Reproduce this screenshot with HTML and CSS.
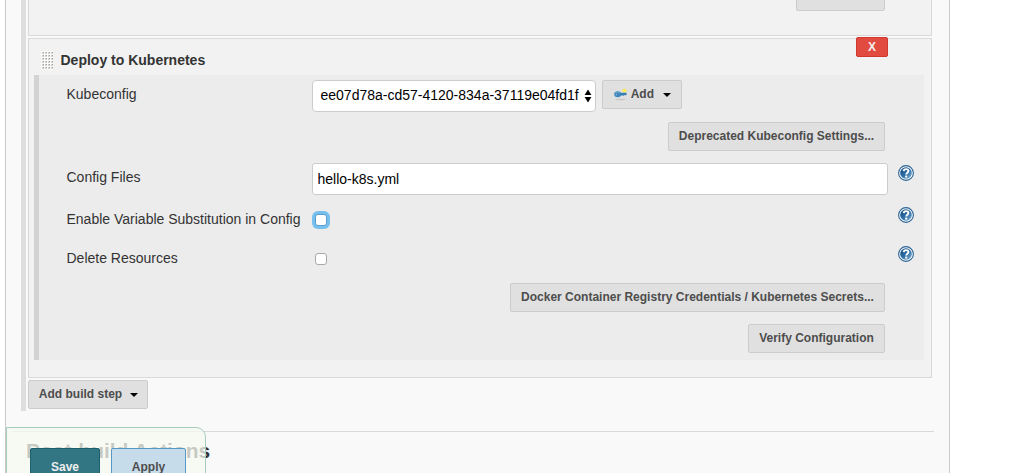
FILE: index.html
```
<!DOCTYPE html>
<html lang="en">
<head>
<meta charset="utf-8">
<title>Job configuration</title>
<link rel="stylesheet" href="styles.css">
</head>
<body>
<svg class="defs" width="0" height="0">
  <linearGradient id="blue" x1="0" y1="0" x2="1" y2="1"><stop offset="0" stop-color="#0d477f"/><stop offset=".5" stop-color="#2d6da5"/><stop offset="1" stop-color="#80aed0"/></linearGradient>
  <pattern id="dots" width="3" height="3" patternUnits="userSpaceOnUse"><rect x="1" y="1" width="2" height="2" fill="#d2d2ce"/><rect x="2" y="1" width="1" height="1" fill="#a3a39e"/></pattern>
  <symbol id="help" viewBox="0 0 16 16">
    <circle cx="8" cy="8" r="7.4" fill="#f4f8fb" stroke="#2a6496" stroke-width="1.1"/>
    <circle cx="8" cy="8" r="5.8" fill="url(#blue)"/>
    <path d="M5.7 6.1C5.8 3.5 10.4 3.4 10.4 6.1C10.4 7.6 8.2 7.7 8.2 9.4" fill="none" stroke="#fff" stroke-width="1.9"/>
    <rect x="7.2" y="10.6" width="2" height="2" fill="#fff"/>
  </symbol>
</svg>
<main class="panel">
  <div class="steps">
    <section class="card previous"><button class="btn advanced">Advanced...</button></section>
    <section class="card">
      <header class="card-head"><svg class="grip" width="12" height="19"><rect width="12" height="19" fill="#fcfcfc"/><rect width="12" height="19" fill="url(#dots)"/></svg><h3>Deploy to Kubernetes</h3><button class="delete">X</button></header>
      <div class="fields">
        <div class="row kube">
          <label>Kubeconfig</label>
          <div class="select"><span class="value">ee07d78a-cd57-4120-834a-37119e04fd1f</span>
            <svg width="8" height="14" viewBox="0 0 8 14"><path d="M4 .5L7.4 6H.6zM4 13.5L.6 8h6.8z"/></svg></div>
          <button class="btn add">
            <svg class="key" width="16" height="16" viewBox="0 0 16 16"><ellipse cx="7.5" cy="13.2" rx="6" ry=".9" fill="#c7c7c7"/><circle cx="12.2" cy="3" r="2.5" fill="#f8e56a"/><circle cx="12.2" cy="3" r="1.2" fill="#fff34a"/><path d="M7 5.3H14.4L15 7.1L13.6 8.7L12.2 8L11.2 9L10 8.5H7z" fill="#347fb8"/><ellipse cx="4.3" cy="7.2" rx="4" ry="3.5" fill="#3e87bd"/><path d="M1.7 6Q4 3.8 6.5 5.6" stroke="#78add1" fill="none"/><circle cx="2.8" cy="7.6" r=".7" fill="#a5c8de"/></svg>
            <span>Add</span><i class="caret"></i></button>
        </div>
        <div class="row buttons deprecated"><button class="btn">Deprecated Kubeconfig Settings...</button></div>
        <div class="row files"><label>Config Files</label><input class="text" type="text" value="hello-k8s.yml"><svg class="help"><use href="#help"/></svg></div>
        <div class="row variable"><label>Enable Variable Substitution in Config</label><span class="check focus"></span><svg class="help"><use href="#help"/></svg></div>
        <div class="row remove"><label>Delete Resources</label><span class="check"></span><svg class="help"><use href="#help"/></svg></div>
        <div class="row buttons docker"><button class="btn">Docker Container Registry Credentials / Kubernetes Secrets...</button></div>
        <div class="row buttons verify"><button class="btn">Verify Configuration</button></div>
      </div>
    </section>
    <button class="btn build"><span>Add build step</span><i class="caret"></i></button>
  </div>
  <section class="post"><h2>Post-build Actions</h2></section>
  <div class="sticky"><button class="save">Save</button><button class="apply">Apply</button></div>
</main>
</body>
</html>
```
FILE: styles.css
```
* { box-sizing: border-box; }
body { margin: 0; height: 473px; overflow: hidden; background: #fff; color: #333; font: 14px/18px "Liberation Sans", Arial, sans-serif; }
button { font: inherit; margin: 0; }
h2, h3 { margin: 0; }
.defs { position: absolute; }
.panel { position: relative; width: 945px; height: 473px; margin-left: 5px; border: solid #c9c9c9; border-width: 0 1px; background: #f9f9f9; overflow: hidden; }
.steps { width: 911px; height: 411px; margin-left: 15px; padding-left: 2px; border-left: 5px solid #dedede; }
.card { width: 904px; height: 340px; border: 1px solid #d9d9d9; background: #f2f2f2; }
.card.previous { display: flex; justify-content: flex-end; height: 36px; margin-bottom: 2px; padding-right: 46px; border-top: 0; }
.btn { display: flex; align-items: center; justify-content: center; height: 29px; padding: 0 10px 2px; border: 1px solid #ccc; border-radius: 2px; background: #e0e0e0; color: #4d4d4d; font-size: 12px; font-weight: bold; line-height: 18px; white-space: nowrap; }
.btn.advanced { width: 89px; margin-top: -18px; padding-bottom: 2px; }
.card-head { display: flex; height: 36px; padding-left: 12px; }
.grip { margin-top: 12px; }
h3 { margin: 12px 0 0 7.5px; font-size: 14px; line-height: 18px; flex: 1; }
.delete { width: 32px; height: 20px; margin: -2px 43px 0 0; padding: 0; border: 1px solid #d0392f; border-radius: 2px; background: #e24b40; color: #f6eeee; font-size: 12px; font-weight: bold; line-height: 18px; }
.fields { width: 890px; height: 285px; margin-left: 5px; border-left: 5px solid #d3d3d3; background: #ececec; }
.row { display: flex; align-items: flex-start; padding-left: 27.5px; }
.row label { width: 245.5px; flex: none; white-space: nowrap; }
.kube { height: 47px; padding-top: 5px; }
.kube label { padding-top: 5px; }
.select { display: flex; align-items: center; justify-content: space-between; width: 284px; height: 32px; padding: 0 3px 0 7.5px; border: 1px solid #ccc; border-radius: 4px; background: #fff; color: #000; }
.value { padding-bottom: 2px; }
.add { width: 80px; height: 29px; margin-left: 6px; justify-content: flex-start; }
.key { margin: 2px 3.5px 0 .5px; }
.caret { width: 0; height: 0; border: 4px solid transparent; border-top-color: #000; border-bottom: 0; margin: 3px 0 0 9px; }
.buttons { justify-content: flex-end; padding-right: 39px; }
.deprecated { height: 41px; }
.deprecated .btn { width: 217px; }
.files { height: 44px; }
.files label { padding-top: 5px; }
.text { width: 576px; height: 32px; padding: 0 5px 1px 4.5px; border: 1px solid #ccc; border-radius: 3px; background: #fff; color: #000; font: 14px "Liberation Sans", Arial, sans-serif; }
.help { width: 16px; height: 16px; margin: 2px 0 0 10px; flex: none; }
.row .check { width: 12px; height: 12px; margin: 7px 0 0 3px; border: 1px solid #a9a9a9; border-radius: 3px; background: #fff; }
.row .check.focus { border-color: #5b9dce; box-shadow: 0 0 0 3px #77c0ee; }
.check + .help { margin: 0 0 0 571px; }
.variable { height: 39px; }
.variable label, .remove label { padding-top: 3px; }
.remove { height: 37px; }
.docker { height: 41px; }
.docker .btn { width: 375px; }
.verify .btn { width: 137px; }
.build { width: 120px; margin-top: 2px; padding-left: 11px; }
.build .caret { margin-left: 8px; }
.post { width: 923px; margin: 20px 0 0 5px; border-top: 1px solid #d9d9d9; padding: 7px 0 0 15px; }
h2 { font-size: 21px; line-height: 24px; letter-spacing: -.03px; white-space: nowrap; }
.sticky { position: absolute; left: 0; top: 427px; display: flex; gap: 11px; width: 200px; height: 55px; padding: 20px 0 0 23px; border: 1px solid #a5cdbd; border-radius: 0 10px 0 0; background: rgba(246,250,240,.76); }
.save, .apply { height: 38px; padding: 0; border: 1px solid #1e616e; border-radius: 2px; background: #327684; color: #eee; font-size: 12px; font-weight: bold; }
.save { width: 70px; }
.apply { width: 75px; border-color: #5599c9; background: #c6dcea; color: #4d4d4d; }
```
